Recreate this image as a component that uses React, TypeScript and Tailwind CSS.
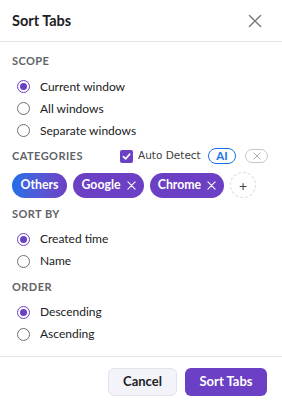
import { useState } from 'react';

const purple = 'bg-[#6b40c4]';

function Radio({ label, checked }: { label: string; checked?: boolean }) {
  return (
    <label className="flex h-[22px] items-center pl-[5px] text-[12px] text-[#202124]">
      {checked ? (
        <span className="flex h-[13px] w-[13px] items-center justify-center rounded-full border-[1.5px] border-[#6b40c4]">
          <span className={`h-[7px] w-[7px] rounded-full ${purple}`} />
        </span>
      ) : (
        <span className="h-[13px] w-[13px] rounded-full border border-[#6f6f6f]" />
      )}
      <span className="ml-[10px]">{label}</span>
    </label>
  );
}

function SectionTitle({ children }: { children: string }) {
  return (
    <div className="text-[11px] font-bold leading-4 tracking-[0.04em] text-[#5f6368]">
      {children}
    </div>
  );
}

function Cross({ size = 9, stroke = '#ffffff', width = 1.2 }: { size?: number; stroke?: string; width?: number }) {
  return (
    <svg width={size} height={size} viewBox="0 0 10 10" fill="none">
      <path d="M1 1L9 9M9 1L1 9" stroke={stroke} strokeWidth={width} strokeLinecap="round" />
    </svg>
  );
}

function Chip({ label, width, removable, gradient }: { label: string; width: string; removable?: boolean; gradient?: boolean }) {
  return (
    <span
      className={`flex h-[25px] items-center justify-center gap-[6px] rounded-full ${width} text-[12.3px] font-bold text-white ${
        gradient ? 'bg-gradient-to-r from-[#1a6fe8] to-[#6b40c4]' : purple
      }`}
    >
      {label}
      {removable && <Cross />}
    </span>
  );
}

export default function App() {
  const [autoDetect] = useState(true);

  return (
    <div className="h-[401px] w-[282px] bg-white font-['Lato',sans-serif]">
      {/* Header */}
      <div className="flex h-[42px] items-center justify-between border-b border-[#e3e3ea] pl-3 pr-[20px]">
        <h1 className="text-[14.5px] font-bold text-[#202124]">Sort Tabs</h1>
        <Cross size={14} stroke="#7a7a7a" width={1} />
      </div>

      <div className="border-b border-[#e3e3ea] px-3 pb-[11px] pt-[11px]">
        <SectionTitle>SCOPE</SectionTitle>
        <div className="mt-[6.5px]">
          <Radio label="Current window" checked />
          <Radio label="All windows" />
          <Radio label="Separate windows" />
        </div>

        {/* Categories */}
        <div className="mt-[5.5px] flex h-[18px] items-center">
          <div className="w-[108px]">
            <SectionTitle>CATEGORIES</SectionTitle>
          </div>
          <label className="flex items-center gap-[5px] font-['DejaVu_Sans',sans-serif] text-[10.5px] text-[#3c4043]">
            <span className={`flex h-[13px] w-[13px] items-center justify-center rounded-[2px] ${autoDetect ? purple : 'border border-gray-500'}`}>
              <svg width="9" height="9" viewBox="0 0 10 10" fill="none">
                <path d="M1.5 5.2L4 7.6L8.6 2.4" stroke="white" strokeWidth="1.8" strokeLinecap="round" strokeLinejoin="round" />
              </svg>
            </span>
            Auto Detect
          </label>
          <span className="ml-auto flex h-[16px] w-[28px] items-center justify-center rounded-full border-[1.5px] border-[#1a73e8] text-[11.5px] font-bold text-[#1a73e8]">
            AI
          </span>
          <span className="ml-[9px] mr-[2px] flex h-[14px] w-[23px] items-center justify-center rounded-full border border-[#c8c8c8]">
            <Cross size={8} stroke="#a0a0a0" width={1} />
          </span>
        </div>

        <div className="mt-[7px] flex items-center gap-[6px]">
          <Chip label="Others" width="w-[55px]" gradient />
          <Chip label="Google" width="w-[71px]" removable />
          <Chip label="Chrome" width="w-[74px]" removable />
          <span className="flex h-[26px] w-[26px] items-center justify-center rounded-full border border-dashed border-[#d6d6de] text-[14px] text-[#444]">
            +
          </span>
        </div>

        <div className="mt-[8px]">
          <SectionTitle>SORT BY</SectionTitle>
        </div>
        <div className="mt-[6px]">
          <Radio label="Created time" checked />
          <Radio label="Name" />
        </div>

        <div className="mt-[7px]">
          <SectionTitle>ORDER</SectionTitle>
        </div>
        <div className="mt-[6px]">
          <Radio label="Descending" checked />
          <Radio label="Ascending" />
        </div>
      </div>

      {/* Footer */}
      <div className="flex justify-end gap-2 px-[15px] pt-[11px]">
        <button className="h-[28px] w-[69px] rounded-[6px] border border-[#e2e2ee] bg-[#f3f3fa] text-[13px] font-bold text-[#202124]">
          Cancel
        </button>
        <button className={`h-[28px] w-[82px] rounded-[6px] ${purple} text-[13px] font-bold text-white`}>
          Sort Tabs
        </button>
      </div>
    </div>
  );
}
